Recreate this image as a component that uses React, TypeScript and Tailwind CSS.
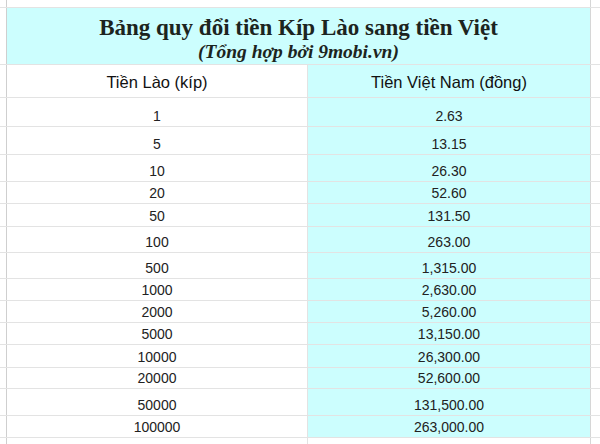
import React from 'react';

const rows: { lao: string; viet: string; h: string }[] = [
  { lao: '1', viet: '2.63', h: 'h-[29px]' },
  { lao: '5', viet: '13.15', h: 'h-[28px]' },
  { lao: '10', viet: '26.30', h: 'h-[27px]' },
  { lao: '20', viet: '52.60', h: 'h-[22px]' },
  { lao: '50', viet: '131.50', h: 'h-[23px]' },
  { lao: '100', viet: '263.00', h: 'h-[26px]' },
  { lao: '500', viet: '1,315.00', h: 'h-[26px]' },
  { lao: '1000', viet: '2,630.00', h: 'h-[22px]' },
  { lao: '2000', viet: '5,260.00', h: 'h-[22px]' },
  { lao: '5000', viet: '13,150.00', h: 'h-[22px]' },
  { lao: '10000', viet: '26,300.00', h: 'h-[23px]' },
  { lao: '20000', viet: '52,600.00', h: 'h-[21px]' },
  { lao: '50000', viet: '131,500.00', h: 'h-[27px]' },
  { lao: '100000', viet: '263,000.00', h: 'h-[22px]' },
];

function Row({ h, children }: { h: string; children: React.ReactNode }) {
  return (
    <div className={`flex ${h} border-b border-[#e3e3e3]`}>
      <div className="w-[7px] shrink-0 border-r border-[#cfcfcf]" />
      {children}
      <div className="flex-1" />
    </div>
  );
}

export default function App() {
  return (
    <div className="w-[600px] h-[444px] overflow-hidden bg-white text-[#222] font-['Liberation_Sans',Arial,sans-serif]">
      <Row h="h-[8px]">
        <div className="w-[584px] shrink-0 border-r border-[#d6d6d6]" />
      </Row>

      <Row h="h-[57px]">
        <div className="w-[584px] shrink-0 border-r border-[#d6d6d6] bg-[#ccfefe] flex flex-col items-center pt-[8px] font-['Liberation_Serif','Times_New_Roman',serif] text-[#1c2420]">
          <div className="text-[23px] leading-[23px] font-bold">Bảng quy đổi tiền Kíp Lào sang tiền Việt</div>
          <div className="text-[19.5px] leading-[25px] font-bold italic">(Tổng hợp bởi 9mobi.vn)</div>
        </div>
      </Row>

      <Row h="h-[33px]">
        <div className="w-[301px] shrink-0 border-r border-[#e3e3e3] flex items-center justify-center pt-[2px] text-[16.5px] text-[#111]">
          Tiền Lào (kíp)
        </div>
        <div className="w-[283px] shrink-0 border-r border-[#d6d6d6] bg-[#ccfefe] flex items-center justify-center pt-[2px] text-[16.5px] text-[#111]">
          Tiền Việt Nam (đồng)
        </div>
      </Row>

      {rows.map((r) => (
        <Row key={r.lao} h={r.h}>
          <div className="w-[301px] shrink-0 border-r border-[#e3e3e3] flex items-end justify-center pb-[2px] text-[14px] leading-[16px]">
            {r.lao}
          </div>
          <div className="w-[283px] shrink-0 border-r border-[#d6d6d6] bg-[#ccfefe] flex items-end justify-center pb-[2px] text-[14px] leading-[16px]">
            {r.viet}
          </div>
        </Row>
      ))}

      <Row h="h-[20px]">
        <div className="w-[301px] shrink-0 border-r border-[#e3e3e3]" />
        <div className="w-[283px] shrink-0 border-r border-[#d6d6d6]" />
      </Row>
    </div>
  );
}
